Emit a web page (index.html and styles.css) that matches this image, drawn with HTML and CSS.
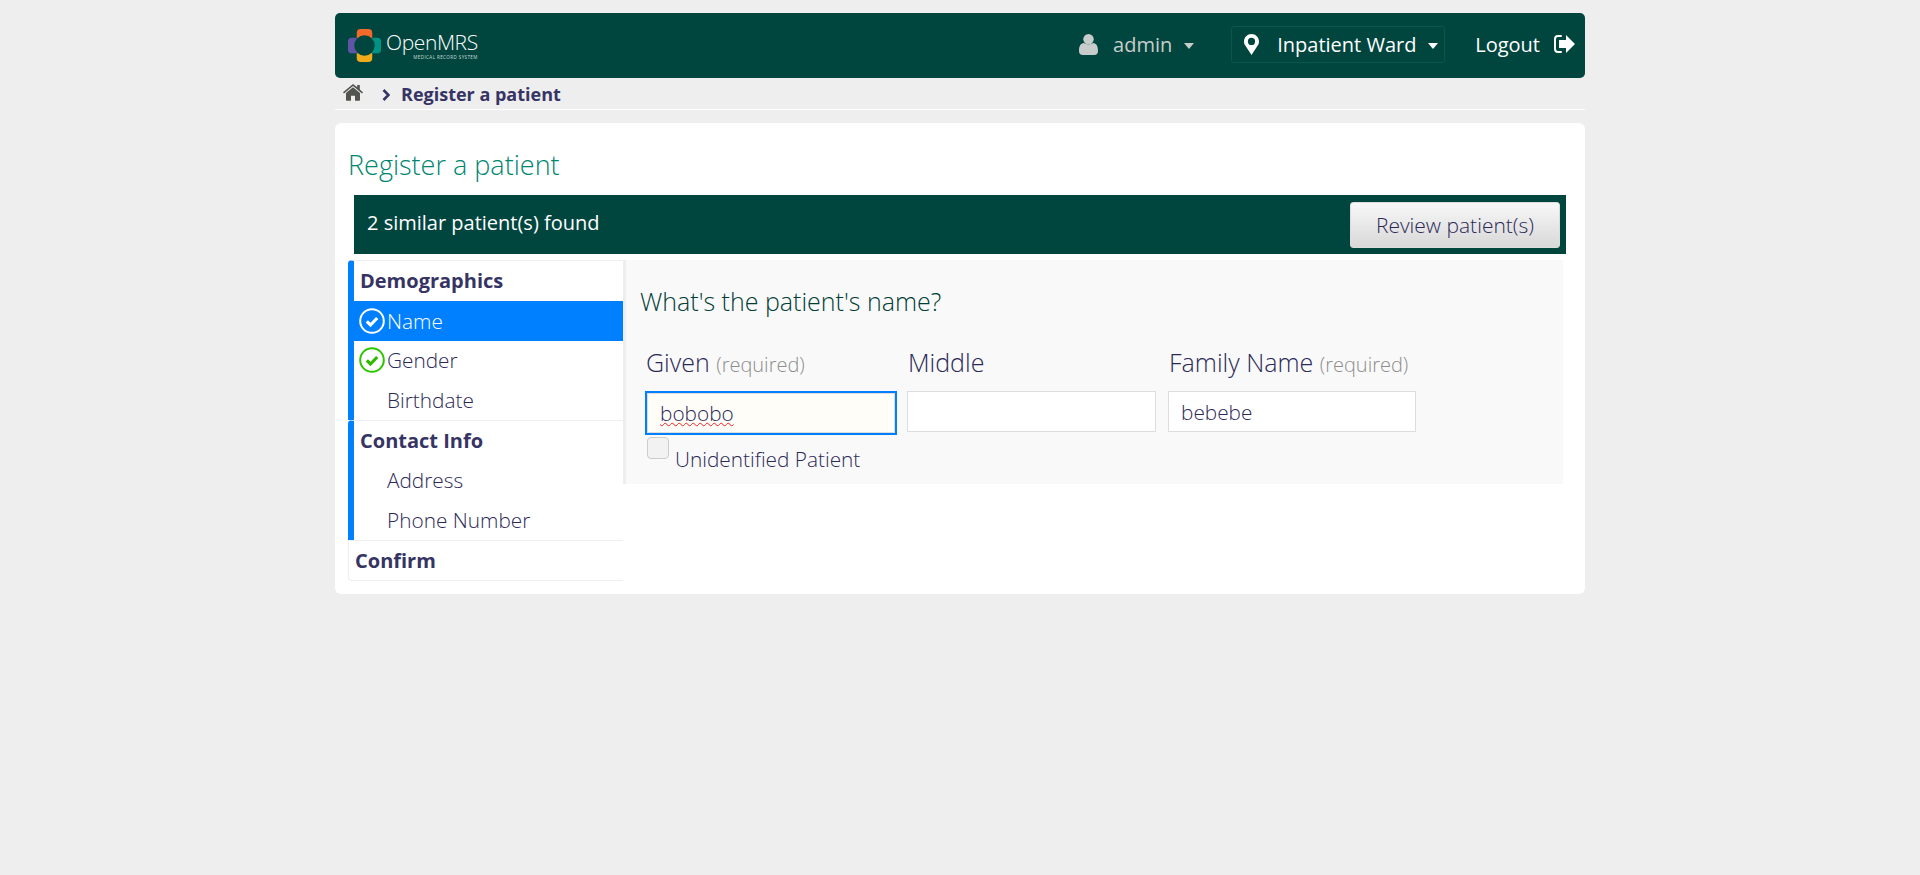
FILE: index.html
```html
<!DOCTYPE html>
<html lang="en">
<head>
    <meta charset="UTF-8">
    <meta name="viewport" content="width=device-width, initial-scale=1.0">
    <title>OpenMRS - Register a patient</title>
    <link rel="stylesheet" href="styles.css">
</head>
<body>
    <div class="wrapper">
        <header class="topbar">
            <a class="logo">
                <svg class="logo-mark" width="33" height="33" viewBox="0 0 34 34">
                    <rect x="9" y="0" width="16" height="12" rx="4" fill="#f26a2a"/>
                    <rect x="9" y="22" width="16" height="12" rx="4" fill="#f0ab1b"/>
                    <rect x="0" y="9" width="12" height="16" rx="4" fill="#5f55a5"/>
                    <rect x="22" y="9" width="12" height="16" rx="4" fill="#009384"/>
                    <circle cx="17" cy="17" r="10.5" fill="#00463f"/>
                </svg>
                <span class="logo-text">
                    <span class="logo-name">OpenMRS</span>
                    <span class="logo-sub">MEDICAL RECORD SYSTEM</span>
                </span>
            </a>
            <nav class="user-nav">
                <span class="nav-item nav-user">
                    <svg class="icon" width="19" height="21" viewBox="0 0 20 22"><circle cx="10" cy="5.5" r="5.5" fill="#c7cdca"/><path d="M0 18c0-6 2-8 5-8.500 3 2 7 2 10 0 3 .5 5 2.500 5 8.500 0 2.500-1.500 4-4 4H4c-2.500 0-4-1.500-4-4z" fill="#c7cdca"/></svg>
                    <span class="nav-label">admin</span>
                    <i class="caret"></i>
                </span>
                <span class="nav-item nav-location">
                    <svg class="icon" width="15" height="21" viewBox="0 0 15 21"><path fill-rule="evenodd" d="M7.500 0C3.400 0 0 3.300 0 7.400c0 1.700.5 2.700 1.300 4.200L7.500 21l6.200-9.400C14.500 10.100 15 9.100 15 7.400 15 3.300 11.600 0 7.500 0zm0 11a3.600 3.600 0 1 1 0-7.200 3.600 3.600 0 0 1 0 7.200z" fill="#fff"/></svg>
                    <span class="nav-label">Inpatient Ward</span>
                    <i class="caret"></i>
                </span>
                <span class="nav-item nav-logout">
                    <span class="nav-label">Logout</span>
                    <svg class="icon" width="21" height="18" viewBox="0 0 21 18"><path d="M7 1H4C2 1 1 2 1 4v10c0 2 1 3 3 3h3" fill="none" stroke="#fff" stroke-width="2" stroke-linecap="round"/><path d="M12 0l9 9-9 9v-5H5V5h7z" fill="#fff"/></svg>
                </span>
            </nav>
        </header>

        <div class="breadcrumbs">
            <svg class="home-icon" width="20" height="17" viewBox="0 0 20 17"><path d="M10 3.200L3 9v7a.8.8 0 0 0 .8.8H8v-5h4v5h4.200a.8.8 0 0 0 .8-.8V9z" fill="#51544f"/><path d="M10 0L0 8.200l1 1.300L10 2.100l9 7.400 1-1.300-3.200-2.600V1h-2.600v2.300z" fill="#51544f"/></svg>
            <svg class="crumb-sep" width="8" height="12" viewBox="0 0 8 12"><path d="M1.500 1l5 5-5 5" fill="none" stroke="#363463" stroke-width="2.600"/></svg>
            <span class="crumb-current">Register a patient</span>
        </div>

        <main class="card">
            <h2 class="page-title">Register a patient</h2>

            <div class="similar-bar">
                <span>2 similar patient(s) found</span>
                <button class="btn-review">Review patient(s)</button>
            </div>

            <div class="form-area">
                <ul class="steps">
                    <li class="section">
                        <div class="section-title">Demographics</div>
                        <div class="step step-active">
                            <svg class="check" width="26" height="26" viewBox="0 0 26 26"><circle cx="13" cy="13" r="11.800" fill="none" stroke="#fff" stroke-width="2"/><path d="M7.800 13.300l3.700 3.700 6.700-7" fill="none" stroke="#fff" stroke-width="3.200"/></svg>
                            Name
                        </div>
                        <div class="step">
                            <svg class="check" width="26" height="26" viewBox="0 0 26 26"><circle cx="13" cy="13" r="11.800" fill="none" stroke="#2fc400" stroke-width="2"/><path d="M7.800 13.300l3.700 3.700 6.700-7" fill="none" stroke="#2fb800" stroke-width="3.200"/></svg>
                            Gender
                        </div>
                        <div class="step step-plain">Birthdate</div>
                    </li>
                    <li class="section">
                        <div class="section-title">Contact Info</div>
                        <div class="step step-plain">Address</div>
                        <div class="step step-plain">Phone Number</div>
                    </li>
                    <li class="section-confirm">Confirm</li>
                </ul>

                <section class="question">
                    <h3 class="question-title">What's the patient's name?</h3>
                    <div class="name-fields">
                        <div class="field field-given">
                            <label>Given <span class="req">(required)</span></label>
                            <input type="text" class="focused" value="bobobo">
                            <div class="unknown">
                                <span class="checkbox"></span>
                                <span class="unknown-label">Unidentified Patient</span>
                            </div>
                        </div>
                        <div class="field field-middle">
                            <label>Middle</label>
                            <input type="text" value="">
                        </div>
                        <div class="field field-family">
                            <label>Family Name <span class="req">(required)</span></label>
                            <input type="text" value="bebebe">
                        </div>
                    </div>
                </section>
            </div>
        </main>
    </div>
</body>
</html>
```

FILE: styles.css
```css
* {
    box-sizing: border-box;
}

body {
    margin: 0;
    background-color: #eee;
    font-family: "Open Sans", "DejaVu Sans", sans-serif;
    color: #363463;
}

.wrapper {
    width: 1250px;
    padding-top: 13px;
    margin-left: 335px;
}

/* header */
.topbar {
    display: flex;
    justify-content: space-between;
    align-items: center;
    height: 65px;
    background-color: #00463f;
    border-radius: 5px;
    padding: 0 10px 3px 13px;
    color: #fff;
}

.logo {
    display: flex;
    align-items: center;
    gap: 5px;
    margin-top: 2px;
}

.logo-text {
    display: flex;
    flex-direction: column;
    color: #fff;
}

.logo-name {
    font-size: 21px;
    font-weight: 300;
    line-height: 23px;
    letter-spacing: -0.4px;
}

.logo-sub {
    font-size: 4.5px;
    line-height: 6px;
    letter-spacing: 0.42px;
    text-align: right;
    color: #d5dedc;
}

.user-nav {
    display: flex;
    align-items: center;
    font-size: 20px;
}

.nav-item {
    display: flex;
    align-items: center;
}

.nav-user {
    color: #c7cdca;
    margin-right: 37px;
}

.nav-user .nav-label {
    margin-left: 15px;
}

.nav-location {
    width: 214px;
    height: 37px;
    border: 1px solid #07574f;
    border-radius: 3px;
    padding-left: 12px;
    margin-right: 30px;
}

.nav-location .nav-label {
    margin-left: 18px;
}

.nav-logout .icon {
    margin-left: 14px;
}

.caret {
    width: 0;
    height: 0;
    margin-left: 12px;
    margin-top: 3px;
    border-left: 5.500px solid transparent;
    border-right: 5.500px solid transparent;
    border-top: 6px solid currentColor;
}

/* breadcrumb */
.breadcrumbs {
    display: flex;
    align-items: center;
    height: 32px;
    padding-left: 8px;
    border-bottom: 1px solid #fff;
    font-size: 18px;
    font-weight: 700;
}

.crumb-sep {
    margin-left: 19px;
    margin-right: 11px;
    margin-top: 2px;
}

.home-icon {
    margin-top: -3px;
}

/* main card */
.card {
    margin-top: 13px;
    height: 471px;
    background-color: #fff;
    border-radius: 6px;
    padding: 26px 13px 0;
}

.page-title {
    margin: 0 0 14px;
    font-size: 27px;
    line-height: 32px;
    font-weight: 300;
    color: #00866f;
}

.similar-bar {
    display: flex;
    justify-content: space-between;
    align-items: center;
    height: 59px;
    margin: 0 6px;
    width: 1212px;
    padding: 0 6px 0 13px;
    background-color: #00463f;
    color: #fff;
    font-size: 20px;
}

.similar-bar span {
    margin-top: -5px;
}

.btn-review {
    width: 210px;
    height: 46px;
    border: 1px solid #ddd;
    border-radius: 3px;
    background: linear-gradient(#f8f8f8, #d8d8d8);
    color: #2b2957;
    font-family: inherit;
    font-size: 21px;
    font-weight: 300;
}

.form-area {
    display: flex;
    align-items: flex-start;
    margin-top: 6px;
}

/* left steps */
.steps {
    width: 275px;
    margin: 0;
    padding: 0;
    list-style: none;
    font-size: 20.800px;
    background-color: #fff;
}

.section {
    border-left: 6px solid #007fff;
    border-top: 1px solid #eee;
    border-top-left-radius: 4px;
}

.section-title {
    height: 40px;
    padding-left: 6px;
    line-height: 40px;
    font-size: 20px;
    font-weight: 700;
}

.step {
    display: flex;
    align-items: center;
    gap: 2px;
    height: 39.500px;
    font-weight: 300;
    color: #2b2957;
}

.step-active {
    background-color: #007fff;
    color: #fff;
}

.check {
    margin-left: 5px;
}

.step-plain {
    padding-left: 33px;
}

.section-confirm {
    height: 41px;
    padding-left: 6px;
    line-height: 40px;
    font-size: 20px;
    font-weight: 700;
    border: 1px solid #eee;
    border-right: 0;
    border-bottom-left-radius: 4px;
}

/* right panel */
.question {
    width: 940px;
    height: 224px;
    background-color: #f9f9f9;
    border-left: 3px solid #eee;
    padding: 25px 14px 0;
}

.question-title {
    margin: 0 0 29px;
    font-size: 25px;
    line-height: 32px;
    font-weight: 300;
    color: #003d36;
}

.name-fields {
    display: flex;
    align-items: flex-start;
    margin-left: 5px;
}

.field label {
    display: block;
    font-size: 25px;
    font-weight: 300;
    line-height: 32px;
    margin-bottom: 13px;
    padding-left: 1px;
    color: #2b2957;
}

.req {
    font-size: 20px;
    line-height: 1;
    color: #8d8d8d;
}

.field input {
    display: block;
    height: 41px;
    border: 1px solid #ddd;
    background-color: #fff;
    padding: 0 12px;
    font-family: inherit;
    font-size: 20.800px;
    font-weight: 300;
    color: #2b2957;
    outline: none;
}

.field-given {
    width: 262px;
}

.field .focused {
    width: 252px;
    height: 44px;
    border: 2px solid #007fff;
    padding: 0 13px;
    background-color: #fffdf8;
    box-shadow: inset 0 0 0 1px #ddd;
    text-decoration: underline wavy #e22;
    text-decoration-thickness: 1px;
}

.field-middle {
    width: 261px;
}

.field-middle input {
    width: 249px;
}

.field-family {
    width: 248px;
}

.field-family input {
    width: 248px;
    margin-top: 2px;
}

.unknown {
    display: flex;
    align-items: flex-start;
    gap: 6px;
    margin-top: 2px;
    padding-left: 2px;
    font-size: 20.800px;
    font-weight: 300;
    color: #2b2957;
}

.checkbox {
    display: block;
    width: 22px;
    height: 22px;
    border: 1px solid #ccc;
    border-radius: 4px;
    background-color: #f2f2f2;
}

.unknown-label {
    line-height: 28px;
    margin-top: 8px;
}
```
